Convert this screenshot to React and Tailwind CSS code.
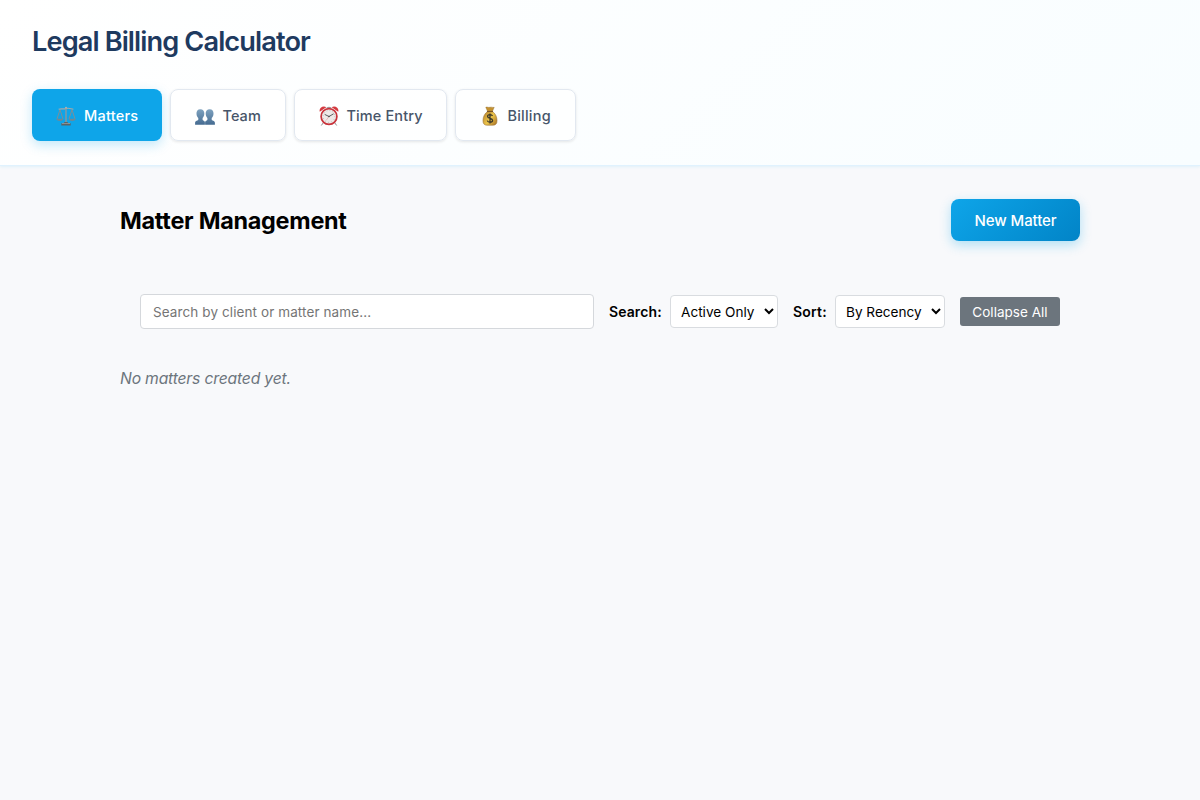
import React from "react";

function ScalesIcon() {
  return (
    <svg width="20" height="20" viewBox="0 0 20 20" fill="none">
      <g stroke="#7c8f99" strokeWidth="1">
        <path d="M4 3.600 1 13M4 3.600 7 13M16 3.600 13 13M16 3.600 19 13" />
      </g>
      <path d="M2.600 3.300C5.500 2.200 7 3.500 10 2.600s4.500.2 7.400.7" stroke="#a3a9ac" strokeWidth="1.100" />
      <path d="M10 1v16" stroke="#8d989e" strokeWidth="1.400" />
      <circle cx="10" cy="1.700" r="1" fill="#aeb0b1" />
      <path d="M.3 12.800h7c-.4 1.700-1.700 2.200-3.500 2.200S.7 14.500.3 12.800ZM12.700 12.800h7c-.4 1.700-1.700 2.200-3.500 2.200s-3.100-.5-3.500-2.200Z" fill="#708995" />
      <path d="M8.400 16h3.200l.5 1.300h2.600v2.100H5.300v-2.100h2.600z" fill="#5c6468" />
      <path d="M6 17.500h8" stroke="#a8acae" strokeWidth=".6" />
    </svg>
  );
}

function TeamIcon() {
  return (
    <svg width="20" height="20" viewBox="0 0 20 20">
      <defs>
        <linearGradient id="people" x1="0" y1="3" x2="0" y2="19" gradientUnits="userSpaceOnUse">
          <stop stopColor="#7fa3c0" />
          <stop offset="1" stopColor="#446a90" />
        </linearGradient>
      </defs>
      <g fill="url(#people)">
        <path d="M5.300 3.200c2.600 0 4.200 1.800 4 4.500-.1 2-.8 3.500-1.700 4.400v1.600c0 .8 2.300 1 2.300 2.500v2.600H.1v-2.100c0-2 3.200-1.900 3.200-3.100v-1.500c-1-.9-1.700-2.400-1.800-4.400-.2-2.700 1.200-4.500 3.800-4.500Z" />
        <path d="M14.700 3.200c-2.600 0-4.200 1.800-4 4.500.1 2 .8 3.500 1.700 4.400v1.600c0 .8-2.300 1-2.300 2.500v2.600h9.800v-2.100c0-2-3.200-1.900-3.200-3.100v-1.500c1-.9 1.700-2.400 1.800-4.400.2-2.700-1.200-4.500-3.800-4.500Z" />
      </g>
    </svg>
  );
}

function ClockIcon() {
  return (
    <svg width="20" height="20" viewBox="0 0 20 20" fill="none">
      <path d="m4.500 16.500-2.200 3M15.500 16.500l2.200 3" stroke="#8e8e91" strokeWidth="1" />
      <path d="M.8 5.700C-.4 2.700 3.400-.8 7.300 1.200ZM19.200 5.700C20.400 2.700 16.600-.8 12.700 1.200Z" fill="#d43a40" />
      <path d="M7.700 1.800c1.500-.6 3.100-.6 4.600 0" stroke="#77777c" strokeWidth=".8" />
      <circle cx="10" cy="10.500" r="7.900" fill="#eee9e7" stroke="#c8333b" strokeWidth="1.700" />
      <circle cx="10" cy="10.500" r="5.900" stroke="#a6a2a2" strokeWidth="1" strokeDasharray=".6 2.489" />
      <path d="m5.700 8.400 4.300 2.100 4.600-2.700" stroke="#4b4e50" strokeWidth=".9" />
      <path d="m10 10.500-3 4" stroke="#d4737a" strokeWidth=".4" />
      <circle cx="10" cy="10.500" r=".8" fill="#4b4e50" />
    </svg>
  );
}

function MoneyIcon() {
  return (
    <svg width="20" height="20" viewBox="0 0 20 20" fill="none">
      <defs>
        <linearGradient id="sack" x1="3" y1="8" x2="17" y2="18" gradientUnits="userSpaceOnUse">
          <stop stopColor="#b8862d" />
          <stop offset=".5" stopColor="#edc64b" />
          <stop offset="1" stopColor="#a97425" />
        </linearGradient>
      </defs>
      <path d="M5.800 1.300c1.500-.6 2.500.5 4.200 0s2.700.5 4.200 0l-1.900 4.200H7.700Z" fill="#c5922f" stroke="#96702c" strokeWidth=".5" />
      <path d="M7.400 5.500h5.200c2.500 2 4.400 5 4.400 9 0 3.300-1.300 4.700-4.200 4.700H7.200C4.300 19.200 3 17.800 3 14.500c0-4 1.900-7 4.400-9Z" fill="url(#sack)" stroke="#9b7132" strokeWidth=".6" />
      <path d="M7 5.500h6" stroke="#775427" strokeWidth="1.200" />
      <path d="M12.500 9.900c-.4-.9-1.400-1.300-2.500-1.300-1.400 0-2.400.7-2.400 1.800 0 2.600 5 1.300 5 4 0 1.100-1 1.800-2.600 1.800-1.400 0-2.300-.5-2.700-1.600M10 7.500v9.900" stroke="#393629" strokeWidth="1.300" />
    </svg>
  );
}

const tab = "flex h-[52px] shrink-0 items-center gap-2 rounded-lg pt-0.5 text-[14.5px] font-medium";
const idle = "border border-[#e2e8f0] bg-white/80 pl-[23.5px] text-[#475569] shadow-[0_1px_3px_rgba(0,0,0,0.1)]";

function Tab({ className, icon, label }) {
  return (
    <button className={`${tab} ${className}`}>
      <span className="h-5 w-5">{icon}</span>
      <span className="whitespace-nowrap">{label}</span>
    </button>
  );
}

export default function App() {
  return (
    <div className="min-h-screen bg-[#f8f9fb] font-['Inter','Liberation_Sans',sans-serif] text-black antialiased">
      <header className="h-[166px] border-b border-[#e0f2fe] bg-linear-135 from-white to-[#f8fdff] px-8 pt-[25px] shadow-[0_1px_3px_rgba(14,165,233,0.1)]">
        <h1 className="h-16 text-[27.2px] leading-[34px] font-semibold tracking-[-0.9px] text-[#1e3a5f]">Legal Billing Calculator</h1>
        <nav className="flex gap-2">
          <Tab className="w-[130px] bg-[#0ea5e9] pl-6 tracking-[0.24px] text-white shadow-[0_4px_12px_rgba(14,165,233,0.25)]" icon={<ScalesIcon />} label="Matters" />
          <Tab className={`w-[116px] tracking-[0.05px] ${idle}`} icon={<TeamIcon />} label="Team" />
          <Tab className={`w-[153px] tracking-[0.12px] ${idle}`} icon={<ClockIcon />} label="Time Entry" />
          <Tab className={`w-[121px] tracking-[0.22px] ${idle}`} icon={<MoneyIcon />} label="Billing" />
        </nav>
      </header>
      <main className="mx-auto w-[960px] pt-[33px]">
        <div className="flex h-[42px] items-center justify-between">
          <h2 className="pt-px text-[23.4px] leading-8 font-bold tracking-[-0.26px]">Matter Management</h2>
          <button className="h-[42px] w-[129px] rounded-lg bg-linear-135 from-[#0ea5e9] to-[#0284c7] pt-0.5 text-[15px] font-medium tracking-[-0.1px] text-white shadow-[0_4px_12px_rgba(14,165,233,0.3)]">New Matter</button>
        </div>
        <div className="mt-[53px] flex h-[35px] items-center px-5 text-sm">
          <input className="h-[35px] w-[454px] rounded border border-[#d5d8dc] bg-white px-3 text-[13.5px] tracking-[0.1px] placeholder:text-[#757575]" placeholder="Search by client or matter name..." />
          <label className="ml-[15px] w-[61px] font-semibold tracking-[0.1px]">Search:</label>
          <select className="h-[33px] w-[108px] rounded border border-[#d9dce0] bg-white px-1.5 text-[13.6px]"><option>Active Only</option></select>
          <label className="ml-[15px] w-[42px] font-semibold tracking-[0.2px]">Sort:</label>
          <select className="h-[33px] w-[110px] rounded border border-[#d9dce0] bg-white px-1.5 text-[13.6px]"><option>By Recency</option></select>
          <button className="ml-[15px] h-[29px] w-[100px] rounded-[3px] bg-[#6c757d] pt-0.5 text-[13.5px] tracking-[0.03px] text-white">Collapse All</button>
        </div>
        <p className="mt-[38px] text-[15.7px] leading-6 tracking-[-0.18px] text-[#6c757d] italic">No matters created yet.</p>
      </main>
    </div>
  );
}
